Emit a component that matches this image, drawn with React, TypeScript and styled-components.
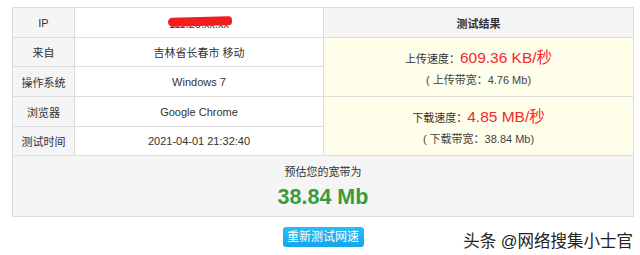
import React from "react";
import styled, { createGlobalStyle } from "styled-components";

const Global = createGlobalStyle`
  html, body { margin: 0; padding: 0; background: #fff; }
  body { font-family: "Liberation Sans", Arial, "Noto Sans CJK SC", sans-serif; color: #333; }
`;

const Page = styled.div`
  position: relative;
  width: 640px;
  height: 255px;
  padding: 7px 0 0 12px;
  box-sizing: border-box;
`;

const Grid = styled.div`
  display: grid;
  width: 622px;
  box-sizing: border-box;
  grid-template-columns: 62px 249px 310px;
  grid-template-rows: 30px 29px 30px 30px 29px 61px;
  border-top: 1px solid #dcdcdc;
  border-left: 1px solid #dcdcdc;
`;

const Cell = styled.div<{ $bg?: string; $row?: string; $col?: string; $bold?: boolean }>`
  box-sizing: border-box;
  border-right: 1px solid #dcdcdc;
  border-bottom: 1px solid #dcdcdc;
  background: ${(p) => p.$bg || "#fff"};
  grid-row: ${(p) => p.$row || "auto"};
  grid-column: ${(p) => p.$col || "auto"};
  display: flex;
  flex-direction: column;
  align-items: center;
  justify-content: center;
  font-size: 11px;
  font-weight: ${(p) => (p.$bold ? "bold" : "normal")};
  color: #333;
`;

const SpeedLine = styled.div`
  display: flex;
  align-items: baseline;
  font-size: 11px;
  color: #333;
  height: 22px;
  line-height: 22px;
`;

const Red = styled.span`
  color: #f2292e;
  font-size: 15.5px;
`;

const SubLine = styled.div`
  font-size: 11px;
  line-height: 13px;
  color: #444;
  margin-top: 4.5px;
`;

const Estimate = styled.div`
  font-size: 11px;
  color: #333;
`;

const Big = styled.div`
  font-size: 21.5px;
  font-weight: bold;
  color: #3a9b3e;
  margin-top: 6px;
`;

const Redacted = styled.div`
  position: relative;
  font-size: 11px;
  color: #333;
  margin-top: 2px;
  &::after {
    content: "";
    position: absolute;
    left: -1px;
    right: -3px;
    top: -1px;
    height: 9px;
    background: #f41c1c;
    border-radius: 5px 4px 4px 5px;
    transform: rotate(-1.5deg);
  }
`;

const ButtonRow = styled.div`
  display: flex;
  justify-content: center;
  width: 622px;
  margin-top: 10px;
`;

const Button = styled.button`
  width: 81px;
  height: 20px;
  padding: 0;
  border: none;
  border-radius: 3px;
  background: linear-gradient(#27bdf5, #14a6ec);
  color: #fff;
  font-family: "Liberation Sans", Arial, "Noto Sans CJK SC", sans-serif;
  font-size: 12px;
  line-height: 20px;
  cursor: pointer;
`;

const Watermark = styled.div`
  position: absolute;
  right: 7px;
  top: 228px;
  font-size: 16.5px;
  color: #222;
  text-shadow: 0 0 2px #fff;
`;

const gray = "#f5f5f5";
const yellow = "#fefeea";

export default function App() {
  return (
    <>
      <Global />
      <Page>
        <Grid>
          <Cell $bg={gray}>IP</Cell>
          <Cell>
            <Redacted>111.26.xx.xx</Redacted>
          </Cell>
          <Cell $bg={gray} $bold>测试结果</Cell>

          <Cell $bg={gray}>来自</Cell>
          <Cell>吉林省长春市 移动</Cell>
          <Cell $bg={yellow} $row="span 2">
            <SpeedLine>
              上传速度：<Red>609.36 KB/秒</Red>
            </SpeedLine>
            <SubLine>( 上传带宽：4.76 Mb)</SubLine>
          </Cell>

          <Cell $bg={gray}>操作系统</Cell>
          <Cell>Windows 7</Cell>

          <Cell $bg={gray}>浏览器</Cell>
          <Cell>Google Chrome</Cell>
          <Cell $bg={yellow} $row="span 2">
            <SpeedLine>
              下载速度：<Red>4.85 MB/秒</Red>
            </SpeedLine>
            <SubLine>( 下载带宽：38.84 Mb)</SubLine>
          </Cell>

          <Cell $bg={gray}>测试时间</Cell>
          <Cell>2021-04-01 21:32:40</Cell>

          <Cell $bg={gray} $col="1 / span 3">
            <Estimate>预估您的宽带为</Estimate>
            <Big>38.84 Mb</Big>
          </Cell>
        </Grid>
        <ButtonRow>
          <Button>重新测试网速</Button>
        </ButtonRow>
        <Watermark>头条 @网络搜集小士官</Watermark>
      </Page>
    </>
  );
}
